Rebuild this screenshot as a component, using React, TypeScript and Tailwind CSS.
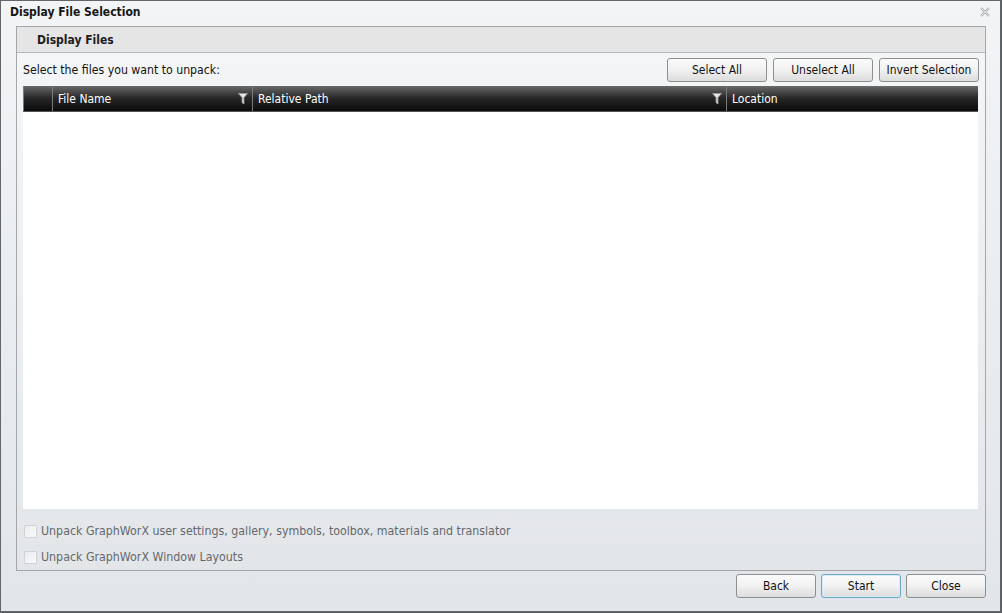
import React from "react";

const font = { fontFamily: "'DejaVu Sans Condensed', 'DejaVu Sans', 'Liberation Sans', sans-serif" };

function Btn({ label, w, focused }: { label: string; w: string; focused?: boolean }) {
  return (
    <button
      className={`${w} h-[24px] rounded-[3px] border text-[12px] text-[#111] bg-gradient-to-b from-[#fbfbfb] via-[#f1f1f1] to-[#dcdcdc] ${
        focused ? "border-[#6fa6c4] shadow-[inset_0_0_0_1px_#d7ecf6]" : "border-[#8e8f8f]"
      }`}
    >
      {label}
    </button>
  );
}

function Funnel() {
  return (
    <svg width="10" height="12" viewBox="0 0 10 12">
      <path d="M0.5 0.5 H9.5 L6 4.5 V11 L4 9.5 V4.5 Z" fill="#e8e8e8" stroke="#9a9a9a" strokeWidth="0.8" />
      <path d="M6 4.5 V11 L4 9.5 V4.5 Z" fill="#bdbdbd" />
    </svg>
  );
}

function Check({ label }: { label: string }) {
  return (
    <div className="flex items-center gap-[4px] h-[26px]">
      <div className="w-[13px] h-[13px] border border-[#cfd3d7] bg-gradient-to-br from-[#e9ecef] to-[#fafafa] rounded-[1px]" />
      <span className="text-[12.3px] text-[#64686d]">{label}</span>
    </div>
  );
}

export default function App() {
  return (
    <div className="w-[1002px] h-[613px] bg-[#565b60] overflow-hidden" style={font}>
      <div className="w-[1001px] h-[612px] border border-[#62676c] bg-gradient-to-b from-[#f2f4f6] to-[#e2e6ea] flex flex-col">
        {/* title */}
        <div className="h-[22px] flex items-center justify-between pl-[9px] pr-[10px] shrink-0">
          <span className="text-[12px] font-bold text-[#151515]">Display File Selection</span>
          <svg width="10" height="10" viewBox="0 0 10 10">
            <path d="M1 1 L9 9 M9 1 L1 9" stroke="#a9adb1" strokeWidth="2.2" />
            <path d="M1 1 L9 9 M9 1 L1 9" stroke="#eef0f2" strokeWidth="0.8" />
          </svg>
        </div>
        {/* group */}
        <div className="ml-[15px] mr-[14px] mt-[3px] h-[545px] border border-[#a4a7aa] flex flex-col shrink-0">
          <div className="h-[26px] bg-[#e5e5e5] border-b border-[#b3b6b9] flex items-center pl-[20px] shrink-0">
            <span className="text-[12px] font-bold text-[#1c1c1c]">Display Files</span>
          </div>
          <div className="flex-1 flex flex-col bg-gradient-to-b from-[#f4f5f6] to-[#e3e6e9] px-[6px]">
            <div className="flex items-center justify-between h-[33px] pt-[1px] shrink-0">
              <span className="text-[12.2px] text-[#111]">Select the files you want to unpack:</span>
              <div className="flex gap-[6px]">
                <Btn label="Select All" w="w-[100px]" />
                <Btn label="Unselect All" w="w-[100px]" />
                <Btn label="Invert Selection" w="w-[100px]" />
              </div>
            </div>
            <div className="h-[423px] bg-white flex flex-col mr-[1px] shrink-0">
              <div className="h-[26px] flex bg-gradient-to-b from-[#6a6a6a] via-[#262626] to-[#0c0c0c] border-b border-[#555] text-white text-[12px]">
                <div className="w-[30px] border-r border-[#7a7a7a] border-l border-[#4a4a4a]" />
                <div className="w-[200px] border-r border-[#7a7a7a] flex items-center justify-between pl-[5px] pr-[4px]">
                  <span>File Name</span>
                  <Funnel />
                </div>
                <div className="w-[474px] border-r border-[#7a7a7a] flex items-center justify-between pl-[5px] pr-[4px]">
                  <span>Relative Path</span>
                  <Funnel />
                </div>
                <div className="flex-1 flex items-center pl-[5px]">
                  <span>Location</span>
                </div>
              </div>
            </div>
            <div className="pt-[9px] pl-[1px] flex flex-col">
              <Check label="Unpack GraphWorX user settings, gallery, symbols, toolbox, materials and translator" />
              <Check label="Unpack GraphWorX Window Layouts" />
            </div>
          </div>
        </div>
        <div className="flex justify-end gap-[5px] pr-[14px] pt-[3px]">
          <Btn label="Back" w="w-[80px]" />
          <Btn label="Start" w="w-[80px]" focused />
          <Btn label="Close" w="w-[80px]" />
        </div>
      </div>
    </div>
  );
}
